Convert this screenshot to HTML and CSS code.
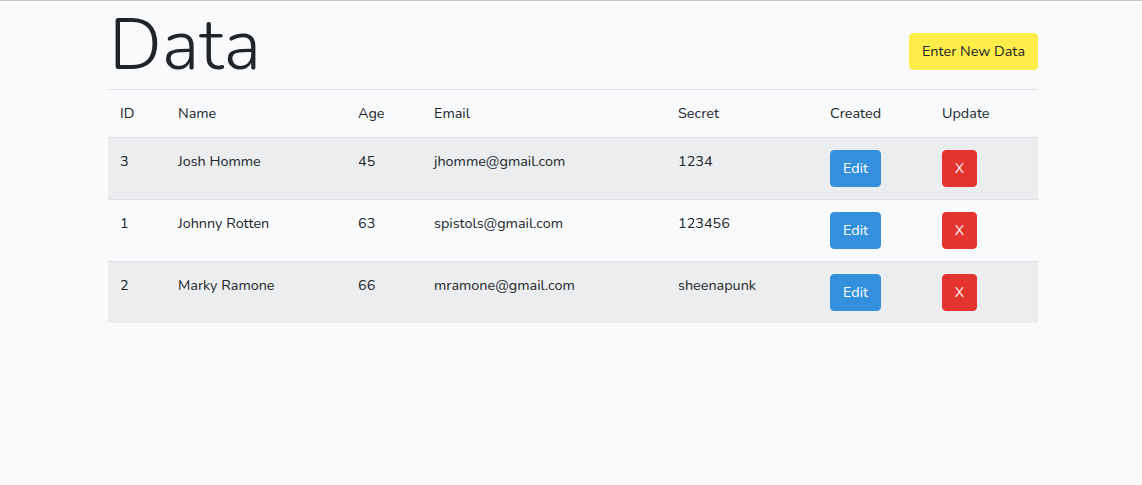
FILE: index.html
```html
<!DOCTYPE html>
<html lang="en">
<head>
<meta charset="utf-8">
<title>Data</title>
<link rel="stylesheet" href="styles.css">
</head>
<body>
<div class="container">
  <div class="header">
    <h1 class="title">Data</h1>
    <button class="btn btn-yellow">Enter New Data</button>
  </div>
  <table class="table">
    <thead>
      <tr><th class="c-id">ID</th><th class="c-name">Name</th><th class="c-age">Age</th><th class="c-email">Email</th><th class="c-secret">Secret</th><th class="c-created">Created</th><th class="c-update">Update</th></tr>
    </thead>
    <tbody>
      <tr class="odd"><td>3</td><td>Josh Homme</td><td>45</td><td>jhomme@gmail.com</td><td>1234</td><td><button class="btn btn-blue">Edit</button></td><td><button class="btn btn-red">X</button></td></tr>
      <tr><td>1</td><td>Johnny Rotten</td><td>63</td><td>spistols@gmail.com</td><td>123456</td><td><button class="btn btn-blue">Edit</button></td><td><button class="btn btn-red">X</button></td></tr>
      <tr class="odd"><td>2</td><td>Marky Ramone</td><td>66</td><td>mramone@gmail.com</td><td>sheenapunk</td><td><button class="btn btn-blue">Edit</button></td><td><button class="btn btn-red">X</button></td></tr>
    </tbody>
  </table>
</div>
</body>
</html>
```
FILE: styles.css
```css
html, body {
  margin: 0;
  padding: 0;
}
body {
  background: #f8fafc;
  border-top: 1px solid #c4c4c4;
  font-family: "Nunito", Lato, "Open Sans", sans-serif;
  font-size: 14.4px;
  line-height: 1.6;
  color: #212529;
  height: 484px;
}
.container {
  width: 930px;
  margin-left: calc(50% - 463px);
}
.header {
  display: flex;
  justify-content: space-between;
  align-items: flex-start;
  height: 88px;
}
.title {
  margin: 0;
  font-size: 72px;
  font-weight: 300;
  line-height: 88px;
  margin-left: 1px;
}
.btn {
  font-family: inherit;
  font-size: 14.4px;
  line-height: 23px;
  padding: 6px 12px;
  border: 1px solid transparent;
  border-radius: 4px;
  cursor: pointer;
}
.btn-yellow {
  margin-top: 32px;
  background: #ffed4a;
  border-color: #ffed4a;
  color: #212529;
  width: 129px;
  padding: 6px 0;
}
.btn-blue {
  background: #3490dc;
  border-color: #3490dc;
  color: #fff;
  width: 51px;
  padding: 6px 0;
}
.btn-red {
  background: #e3342f;
  border-color: #e3342f;
  color: #fff;
  width: 35px;
  padding: 6px 0;
}
.table {
  width: 930px;
  border-collapse: collapse;
  table-layout: fixed;
}
.table th, .table td {
  box-sizing: border-box;
  text-align: left;
  font-weight: 400;
  padding: 12px;
  border-top: 1px solid #dee2e6;
  vertical-align: top;
}
.table th.c-id { width: 58px; }
.table th.c-name { width: 180px; }
.table th.c-age { width: 76px; }
.table th.c-email { width: 244px; }
.table th.c-secret { width: 152px; }
.table th.c-created { width: 112px; }
.table th.c-update { width: 108px; }
.table thead th {
  border-bottom: 1px solid #dee2e6;
  vertical-align: bottom;
}
.table tr.odd {
  background: rgba(0, 0, 0, 0.05);
}
```
